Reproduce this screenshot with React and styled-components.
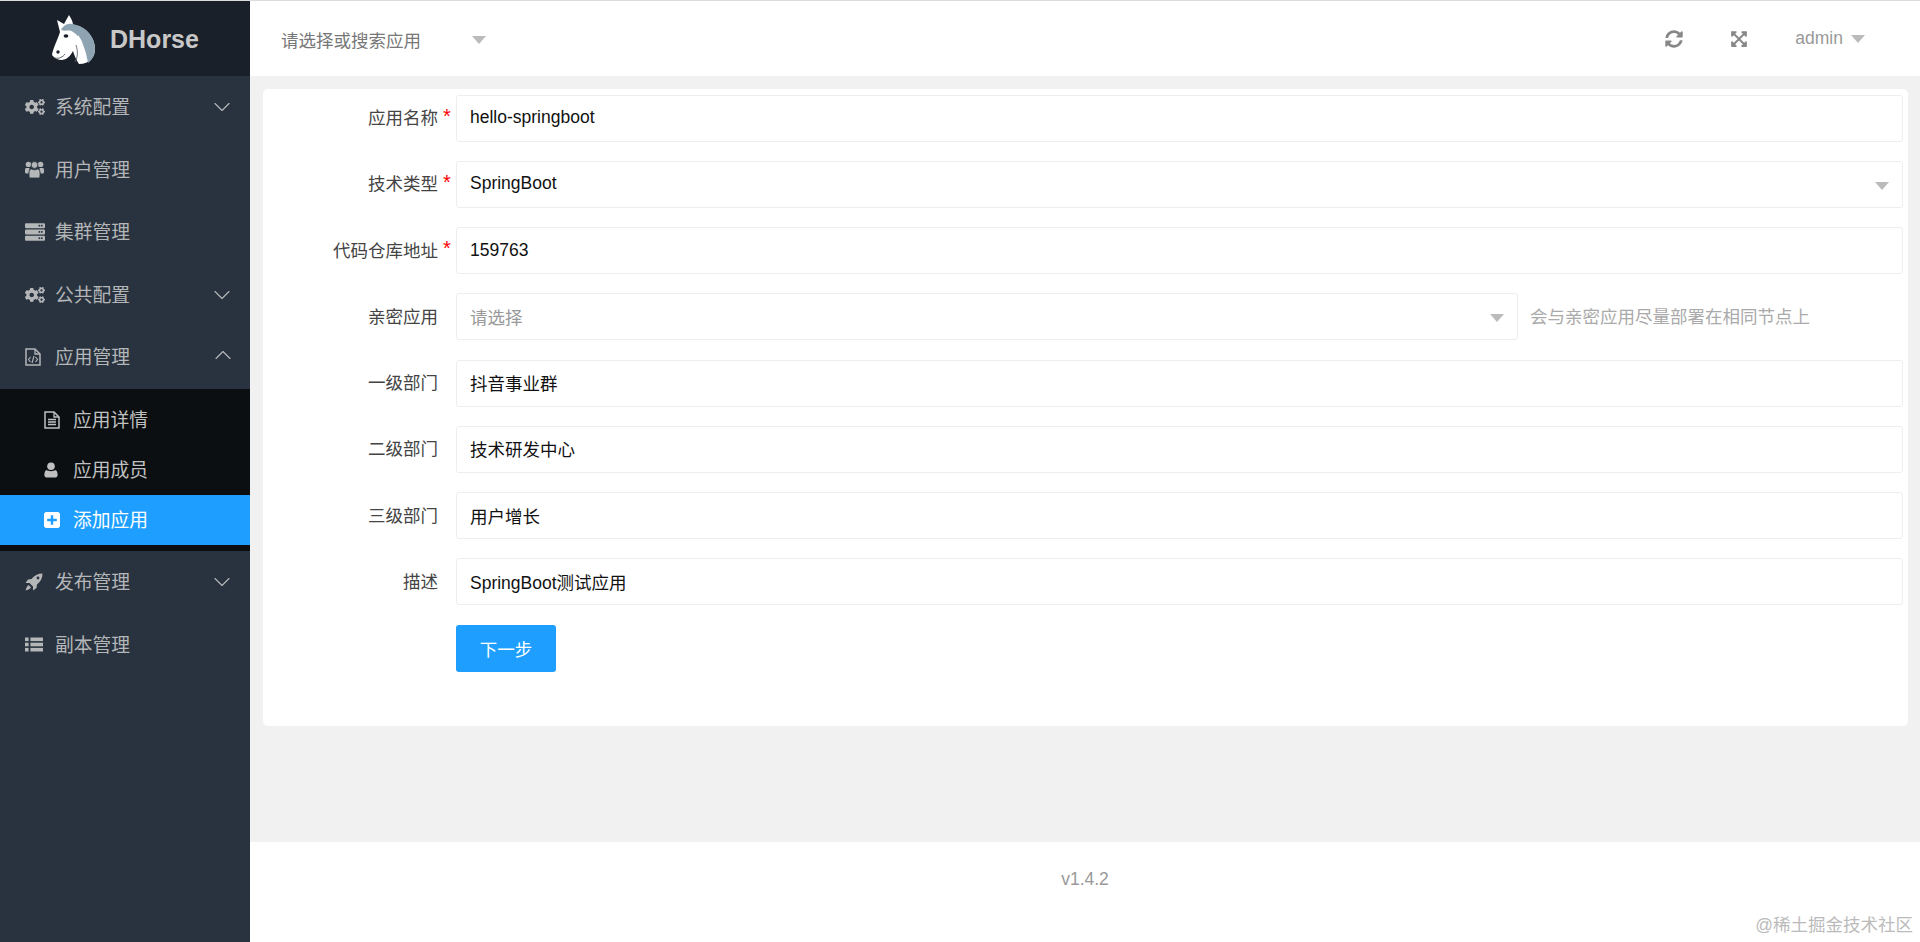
import React from 'react'
import styled, { createGlobalStyle } from 'styled-components'
import { ChevronDown, ChevronUp } from 'lucide-react'
import {
  FaCogs,
  FaServer,
  FaSyncAlt,
  FaExpandArrowsAlt,
} from 'react-icons/fa'

const FONT = '"Liberation Sans", "Noto Sans CJK SC", sans-serif'

const GlobalStyle = createGlobalStyle`
  html, body {
    margin: 0;
    height: 100%;
    overflow: hidden;
  }
  body {
    font-family: ${FONT};
    font-size: 17.5px;
    background: #f1f1f1;
  }
`

const HorseLogo = () => (
  <svg width='46' height='52' viewBox='50 14 46 52'>
    <path
      d='M60 33 L57 21 L64 25 L69 16 C71 19 73 23 73 26 C85 27 95 38 95 50 C95 58 90 65 79 65 C77 62 74 56 73 52 C70 57 68 60 62 61 C58 61 54 59 52 56 C53 49 58 40 60 33 Z'
      fill='#fff'
    />
    <path
      d='M61 31 C65 24 71 24 76 26 C86 28 95 38 95 50 C95 56 92 61 88 64 C86 52 82 38 73 33 C69 30 66 33 61 31 Z'
      fill='#8fa4b2'
    />
    <path d='M78 37 C83 44 84 52 83 60' stroke='#fff' strokeWidth='1.4' fill='none' />
    <path d='M76 46 C78 52 78 58 75 63' stroke='#5c6670' strokeWidth='0.9' fill='none' />
    <ellipse cx='66' cy='37' rx='2.4' ry='1.7' fill='#1c2129' />
    <circle cx='58' cy='53' r='1.7' fill='#1c2129' />
    <path d='M55 59 C59 60 63 58 65 55' stroke='#3a424c' strokeWidth='0.8' fill='none' />
  </svg>
)

// font-awesome 4 shapes, the packaged v5 ones differ too much
const UsersIcon = () => (
  <svg width='19' height='19' viewBox='0 0 19 19' fill='currentColor'>
    <circle cx='3.4' cy='4.4' r='2.7' />
    <circle cx='15.6' cy='4.4' r='2.7' />
    <path d='M0 9.5 C0 8.2 1 8 2 8 H4.5 L3.6 13.5 H1.5 C.5 13.5 0 12.9 0 12 Z' />
    <path d='M19 9.5 C19 8.2 18 8 17 8 H14.5 L15.4 13.5 H17.5 C18.5 13.5 19 12.9 19 12 Z' />
    <circle cx='9.5' cy='5' r='3.4' stroke='#29333f' strokeWidth='0.8' />
    <path
      d='M6.5 9 C8 10 11 10 12.5 9 C14.5 9 15 11 15 13 V16 C15 17.4 14 18 13 18 H6 C5 18 4 17.4 4 16 V13 C4 11 4.5 9 6.5 9 Z'
      stroke='#29333f'
      strokeWidth='0.8'
    />
  </svg>
)

const ListIcon = () => (
  <svg width='18' height='15' viewBox='0 0 18 15' fill='currentColor'>
    <rect x='0' y='0.5' width='3.6' height='3.6' />
    <rect x='0' y='5.7' width='3.6' height='3.6' />
    <rect x='0' y='10.9' width='3.6' height='3.6' />
    <rect x='5.4' y='0.5' width='12.6' height='3.6' />
    <rect x='5.4' y='5.7' width='12.6' height='3.6' />
    <rect x='5.4' y='10.9' width='12.6' height='3.6' />
  </svg>
)

const RocketIcon = () => (
  <svg width='18' height='18' viewBox='0 0 18 18' fill='currentColor'>
    <path d='M17.5 .5 C13 .5 9 2.5 6.5 6 L3 6.5 L.5 10 L4.5 10 L8 13.5 L8 17.5 L11.5 15 L12 11.5 C15.5 9 17.5 5 17.5 .5 Z' />
    <path d='M3.5 12 C2 13 1 15.5 .5 17.5 C2.5 17 5 16 6 14.5 Z' />
    <circle cx='13' cy='5' r='1.4' fill='#29333f' />
  </svg>
)

const FileIcon = ({ code }) => (
  <svg width='16' height='18' viewBox='0 0 16 18' fill='none' stroke='currentColor'>
    <path d='M1 1 H10 L15 6 V17 H1 Z' strokeWidth='1.5' />
    <path d='M10 1 V6 H15' strokeWidth='1.3' />
    {code ? (
      <path d='M5.5 9 L3.5 11.5 L5.5 14 M10.5 9 L12.5 11.5 L10.5 14 M9 8 L7 15' strokeWidth='1.1' />
    ) : (
      <path d='M4 8.5 H12 M4 11 H12 M4 13.5 H12' strokeWidth='1.3' />
    )}
  </svg>
)

const UserIcon = () => (
  <svg width='14' height='16' viewBox='0 0 14 16' fill='currentColor'>
    <circle cx='7' cy='4.2' r='3.8' />
    <path d='M2.5 8 C4 9.5 10 9.5 11.5 8 C13 8.5 13.6 10.5 13.6 13 C13.6 14.5 12.8 15.5 11.5 15.5 H2.5 C1.2 15.5 .4 14.5 .4 13 C.4 10.5 1 8.5 2.5 8 Z' />
  </svg>
)

const PlusIcon = () => (
  <svg width='16' height='16' viewBox='0 0 448 448' fill='currentColor'>
    <path
      fillRule='evenodd'
      d='M64 0 H384 C419 0 448 29 448 64 V384 C448 419 419 448 384 448 H64 C29 448 0 419 0 384 V64 C0 29 29 0 64 0 Z M190 90 V190 H90 V258 H190 V358 H258 V258 H358 V190 H258 V90 Z'
    />
  </svg>
)

const MENU = [
  { label: '系统配置', icon: <FaCogs />, arrow: 'down' },
  { label: '用户管理', icon: <UsersIcon /> },
  { label: '集群管理', icon: <FaServer /> },
  { label: '公共配置', icon: <FaCogs />, arrow: 'down' },
  {
    label: '应用管理',
    icon: <FileIcon code />,
    arrow: 'up',
    children: [
      { label: '应用详情', icon: <FileIcon /> },
      { label: '应用成员', icon: <UserIcon /> },
      { label: '添加应用', icon: <PlusIcon />, active: true },
    ],
  },
  { label: '发布管理', icon: <RocketIcon />, arrow: 'down' },
  { label: '副本管理', icon: <ListIcon /> },
]

const FIELDS = [
  { label: '应用名称', value: 'hello-springboot', required: true },
  { label: '技术类型', value: 'SpringBoot', required: true, select: true },
  { label: '代码仓库地址', value: '159763', required: true },
  {
    label: '亲密应用',
    placeholder: '请选择',
    select: true,
    hint: '会与亲密应用尽量部署在相同节点上',
  },
  { label: '一级部门', value: '抖音事业群' },
  { label: '二级部门', value: '技术研发中心' },
  { label: '三级部门', value: '用户增长' },
  { label: '描述', value: 'SpringBoot测试应用' },
]

const App = () => {
  return (
    <Page>
      <GlobalStyle />
      <Sidebar>
        <Brand>
          <HorseLogo />
          <BrandName>DHorse</BrandName>
        </Brand>
        <nav>
          {MENU.map((item) => (
            <div key={item.label}>
              <MenuItem>
                <MenuIcon>{item.icon}</MenuIcon>
                <MenuText>{item.label}</MenuText>
                {item.arrow === 'down' && <ArrowDown size={28} strokeWidth={1} />}
                {item.arrow === 'up' && <ArrowUp size={28} strokeWidth={1} />}
              </MenuItem>
              {item.children && (
                <SubMenu>
                  {item.children.map((child) => (
                    <SubItem key={child.label} $active={child.active}>
                      <SubIcon>{child.icon}</SubIcon>
                      <MenuText>{child.label}</MenuText>
                    </SubItem>
                  ))}
                </SubMenu>
              )}
            </div>
          ))}
        </nav>
      </Sidebar>
      <Main>
        <Header>
          <AppPicker>
            <span>请选择或搜索应用</span>
            <Caret />
          </AppPicker>
          <HeaderTools>
            <ToolIcon>
              <FaSyncAlt />
            </ToolIcon>
            <ToolIcon>
              <FaExpandArrowsAlt />
            </ToolIcon>
            <UserMenu>
              admin
              <Caret />
            </UserMenu>
          </HeaderTools>
        </Header>
        <Content>
          <Card>
            {FIELDS.map((field) => (
              <FormRow key={field.label}>
                <Label>{field.label}</Label>
                <Star>{field.required ? '*' : ''}</Star>
                <Field $muted={!field.value} $narrow={!!field.hint}>
                  {field.value || field.placeholder}
                  {field.select && <FieldCaret />}
                </Field>
                {field.hint && <Hint>{field.hint}</Hint>}
              </FormRow>
            ))}
            <NextButton>下一步</NextButton>
          </Card>
        </Content>
        <Footer>v1.4.2</Footer>
      </Main>
      <Watermark>@稀土掘金技术社区</Watermark>
    </Page>
  )
}

export default App

const Page = styled.div`
  display: flex;
  height: 941px;
  border-top: 1px solid #dcdcdc;
  overflow: hidden;
`

const Sidebar = styled.aside`
  flex: 0 0 250px;
  background: #29333f;
  color: #b4b6b8;
`

const Brand = styled.div`
  display: flex;
  align-items: center;
  gap: 14px;
  height: 75px;
  padding-left: 50px;
  background: #1a2029;
`

const BrandName = styled.div`
  font-size: 25px;
  font-weight: 700;
  color: #c8c8c8;
  margin-top: 2px;
`

const MenuItem = styled.div`
  position: relative;
  display: flex;
  align-items: center;
  height: 62.5px;
  padding-left: 25px;
`

const MenuIcon = styled.span`
  display: flex;
  width: 30px;
  font-size: 20px;
  color: #b4b6b8;
`

const MenuText = styled.span`
  font-size: 18.75px;
  margin-top: -3px;
`

const ArrowDown = styled(ChevronDown)`
  position: absolute;
  right: 14px;
  top: 17px;
  color: #b4b6b8;
`

const ArrowUp = styled(ChevronUp)`
  position: absolute;
  right: 13px;
  top: 15px;
  color: #b4b6b8;
`

const SubMenu = styled.div`
  padding: 6.25px 0;
  background: #0b0f12;
`

const SubItem = styled.div`
  display: flex;
  align-items: center;
  height: 50px;
  padding-left: 44px;
  color: ${(p) => (p.$active ? '#fff' : '#c0c0c0')};
  background: ${(p) => (p.$active ? '#1e9fff' : 'transparent')};
`

const SubIcon = styled.span`
  display: flex;
  width: 29px;
`

const Main = styled.div`
  flex: 1;
  display: flex;
  flex-direction: column;
  min-width: 0;
`

const Header = styled.header`
  display: flex;
  align-items: center;
  justify-content: space-between;
  height: 75px;
  flex: none;
  padding: 0 55px 0 31px;
  background: #fff;
  color: #777;
`

const AppPicker = styled.div`
  display: flex;
  align-items: center;
  gap: 51px;
  margin-top: 2px;
`

const Caret = styled.i`
  display: block;
  width: 0;
  height: 0;
  border-style: solid;
  border-width: 8px 7px 0;
  border-color: #bbb transparent transparent;
`

const HeaderTools = styled.div`
  display: flex;
  align-items: center;
  color: #999;
`

const ToolIcon = styled.span`
  display: flex;
  margin-right: 47px;
  font-size: 18px;
  color: #888;
`

const UserMenu = styled.div`
  display: flex;
  align-items: center;
  gap: 8px;
  font-size: 17.5px;
`

const Content = styled.main`
  flex: 1;
  padding: 13px 12px 0 13px;
  background: #f1f1f1;
`

const Card = styled.section`
  height: 637px;
  box-sizing: border-box;
  padding: 5.6px 5px 0 0;
  background: #fff;
  border-radius: 5px;
`

const FormRow = styled.div`
  display: flex;
  align-items: center;
  height: 47px;
  margin-bottom: 19.25px;
`

const Label = styled.div`
  width: 175px;
  flex: none;
  margin-top: -3px;
  text-align: right;
  color: #444;
`

const Star = styled.div`
  width: 18px;
  flex: none;
  height: 24px;
  padding-left: 5px;
  box-sizing: border-box;
  font-size: 20px;
  line-height: 24px;
  margin-top: -5px;
  color: #f00;
`

const Field = styled.div`
  position: relative;
  display: flex;
  align-items: center;
  box-sizing: border-box;
  height: 47px;
  padding: 0 0 1px 13px;
  border: 1px solid #eee;
  border-radius: 3px;
  color: ${(p) => (p.$muted ? '#999' : '#111')};
  ${(p) => (p.$narrow ? 'width: 1062px; flex: none;' : 'flex: 1;')}
`

const FieldCaret = styled(Caret)`
  position: absolute;
  right: 13px;
  top: 20px;
`

const Hint = styled.div`
  margin: -3px 0 0 12px;
  color: #aaa;
  white-space: nowrap;
`

const NextButton = styled.button`
  display: block;
  width: 100px;
  height: 47px;
  margin: 0 0 0 193px;
  padding: 0;
  border: 0;
  border-radius: 3px;
  background: #1e9fff;
  color: #fff;
  font: inherit;
`

const Footer = styled.footer`
  display: flex;
  align-items: center;
  justify-content: center;
  flex: none;
  box-sizing: border-box;
  height: 100px;
  padding-bottom: 26px;
  background: #fff;
  color: #999;
`

const Watermark = styled.div`
  position: absolute;
  right: 7px;
  bottom: 6px;
  font-size: 17.5px;
  color: #bbb;
`
